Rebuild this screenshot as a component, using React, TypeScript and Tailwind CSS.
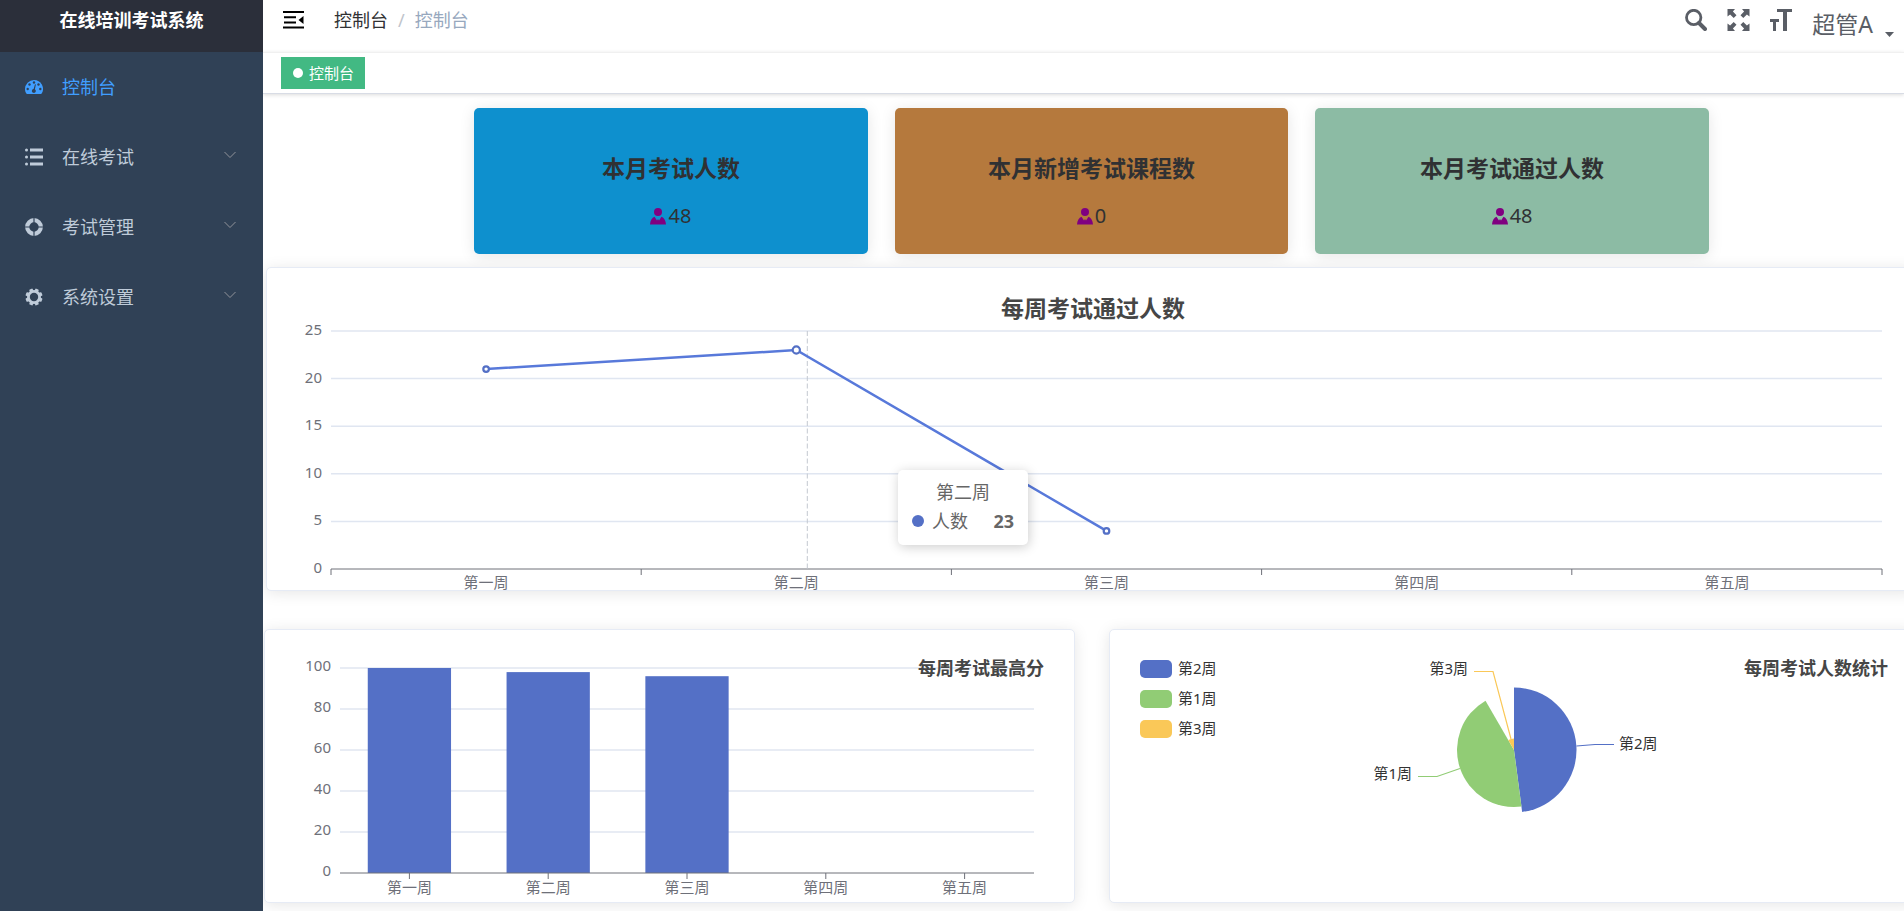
import { useLayoutEffect, useRef, useState, ReactNode } from "react";

const weeks = ["第一周", "第二周", "第三周", "第四周", "第五周"];
const passed = [21, 23, 4];
const topScores = [100, 98, 96];

const stats = [
  { title: "本月考试人数", value: 48, color: "bg-[#0e90ce]" },
  { title: "本月新增考试课程数", value: 0, color: "bg-[#b5793d]" },
  { title: "本月考试通过人数", value: 48, color: "bg-[#8cbba4]" },
];

const slices = [
  { name: "第2周", fill: "#5470c6", bg: "bg-[#5470c6]" },
  { name: "第1周", fill: "#91cc75", bg: "bg-[#91cc75]" },
  { name: "第3周", fill: "#fac858", bg: "bg-[#fac858]" },
];

const cardStyle = "bg-white border border-[#e6ebf5] rounded-[5px] shadow-[0_2px_15px_rgba(0,0,0,0.1)] overflow-hidden";

// charts redraw to the width of their card
function useWidth(initial: number) {
  const ref = useRef<HTMLDivElement>(null);
  const [width, setWidth] = useState(initial);

  useLayoutEffect(() => {
    const el = ref.current;
    if (!el) return;
    const update = () => setWidth(el.clientWidth);
    update();
    const observer = new ResizeObserver(update);
    observer.observe(el);
    return () => observer.disconnect();
  }, []);

  return { ref, width };
}

function DashboardIcon() {
  return (
    <svg className="w-[18px] h-[18px]" viewBox="0 0 18 18" fill="currentColor">
      <path d="M9 2a9 9 0 0 0-9 9c0 1.700.5 3.300 1.300 4.600.2.300.5.400.8.400h13.800c.3 0 .6-.1.800-.4A9 9 0 0 0 9 2z" />
      <g fill="#304156">
        <circle cx="9" cy="4.500" r="1.200" />
        <circle cx="4.500" cy="6.500" r="1.200" />
        <circle cx="13.500" cy="6.500" r="1.200" />
        <circle cx="2.700" cy="11" r="1.200" />
        <circle cx="15.300" cy="11" r="1.200" />
        <path d="M10 6.300l.9.300-1 4.600a2 2 0 1 1-1.300-.3z" />
      </g>
    </svg>
  );
}

function ListIcon() {
  return (
    <svg className="w-[18px] h-[18px]" viewBox="0 0 18 18" fill="currentColor">
      <path d="M5 .5h13v3H5zM5 7.500h13v3H5zM5 14.500h13v3H5z" />
      <circle cx="1.500" cy="2" r="1.500" />
      <circle cx="1.500" cy="9" r="1.500" />
      <circle cx="1.500" cy="16" r="1.500" />
    </svg>
  );
}

function RingIcon() {
  return (
    <svg className="w-[18px] h-[18px]" viewBox="0 0 18 18" fill="none">
      <circle cx="9" cy="9" r="6.800" stroke="currentColor" strokeWidth="4.200" />
      <path d="M9 0v5M9 13v5M0 9h5M13 9h5" stroke="#304156" strokeWidth="1.200" />
    </svg>
  );
}

function GearIcon() {
  return (
    <svg className="w-[18px] h-[18px]" viewBox="0 0 18 18" fill="currentColor">
      {[22.5, 67.5, 112.5, 157.5].map((a) => (
        <rect key={a} x="7.200" y=".4" width="3.600" height="17.200" rx=".8" transform={`rotate(${a} 9 9)`} />
      ))}
      <circle cx="9" cy="9" r="7" />
      <circle cx="9" cy="9" r="4.200" fill="#304156" />
    </svg>
  );
}

function PersonIcon() {
  return (
    <svg className="w-4 h-[17px] text-[#800080]" viewBox="0 0 16 17" fill="currentColor">
      <circle cx="8" cy="4" r="4" />
      <path d="M4.500 8.700L7 12.500l1-1.500 1 1.500 2.500-3.800c2.500 1 4.300 3.600 4.500 7.800H0c.2-4.200 2-6.800 4.500-7.800z" />
    </svg>
  );
}

function SearchIcon() {
  return (
    <svg className="w-[22px] h-[22px]" viewBox="0 0 22 22" fill="none" stroke="currentColor">
      <circle cx="8.700" cy="8.500" r="7.200" strokeWidth="2.800" />
      <path d="M14 14l6 6" strokeWidth="4" strokeLinecap="round" />
    </svg>
  );
}

function FullscreenIcon() {
  return (
    <svg className="w-[23px] h-[22px]" viewBox="0 0 22 22" fill="currentColor">
      {[0, 90, 180, 270].map((a) => (
        <path key={a} d="M0 0h7.500L5.400 2.600 9 6.200 6.200 9 2.600 5.400 0 7.500z" transform={`rotate(${a} 11 11)`} />
      ))}
    </svg>
  );
}

function FontSizeIcon() {
  return (
    <svg className="w-[22px] h-[22px]" viewBox="0 0 22 22" fill="currentColor">
      <rect x="7" y="0" width="15" height="3" />
      <rect x="13" y="0" width="4" height="22" />
      <rect x="0" y="10" width="9" height="3" />
      <rect x="3" y="10" width="3" height="12" />
    </svg>
  );
}

function CollapseIcon() {
  return (
    <svg className="w-[21px] h-[18px]" viewBox="0 0 21 18" fill="currentColor">
      <path d="M0 0h21v2H0zM1 5.300h12v2H1zM1 10.500h12v2H1zM0 15.500h21v2H0zM20.500 5v8L15.500 9z" />
    </svg>
  );
}

const menu: { label: string; icon: ReactNode; active?: boolean }[] = [
  { label: "控制台", icon: <DashboardIcon />, active: true },
  { label: "在线考试", icon: <ListIcon /> },
  { label: "考试管理", icon: <RingIcon /> },
  { label: "系统设置", icon: <GearIcon /> },
];

function Sidebar() {
  return (
    <aside className="w-[263px] shrink-0 bg-[#304156] text-[#bfcbd9]">
      <h1 className="h-[52px] pb-3 flex items-center justify-center bg-[#2b2f3a] text-white text-lg font-bold">
        在线培训考试系统
      </h1>
      <nav>
        {menu.map((item) =>
          item.active ? (
            <a key={item.label} href="#" className="flex items-center h-[70px] px-[25px] text-lg text-[#409eff]">
              {item.icon}
              <span className="ml-[19px]">{item.label}</span>
            </a>
          ) : (
            <button key={item.label} className="flex items-center w-full h-[70px] pl-[25px] pr-[27px] text-lg cursor-pointer">
              {item.icon}
              <span className="ml-[19px]">{item.label}</span>
              <svg className="ml-auto w-3 h-2 mb-1 text-[#909399]" viewBox="0 0 12 8" fill="none" stroke="currentColor">
                <path d="M.5 1L6 6.500 11.500 1" />
              </svg>
            </button>
          )
        )}
      </nav>
    </aside>
  );
}

function Header() {
  return (
    <header className="flex items-center h-[52px] pb-3 pl-5 pr-[10px] text-lg">
      <button aria-label="收起菜单" className="text-black cursor-pointer">
        <CollapseIcon />
      </button>
      <nav className="flex items-center ml-[30px]">
        <a href="#" className="text-[#303133]">控制台</a>
        <span className="mx-[10px] text-[#c0c4cc]">/</span>
        <span className="text-[#97a8be]">控制台</span>
      </nav>
      <div className="ml-auto flex items-center gap-5 text-[#5a5e66]">
        <button aria-label="搜索" className="cursor-pointer"><SearchIcon /></button>
        <button aria-label="全屏" className="cursor-pointer"><FullscreenIcon /></button>
        <button aria-label="字体大小" className="cursor-pointer"><FontSizeIcon /></button>
        <button className="flex items-end mt-2 text-[23px] leading-8 cursor-pointer">
          超管A
          <svg className="ml-3 mb-[3px] w-[9px] h-[5px]" viewBox="0 0 9 5" fill="currentColor">
            <path d="M0 0h9L4.500 5z" />
          </svg>
        </button>
      </div>
    </header>
  );
}

function TagsBar() {
  return (
    <div className="h-[42px] px-[18px] pt-1 border-y border-t-[#f0f0f0] border-b-[#d8dce5] shadow-[0_1px_4px_rgba(0,0,0,0.14)]">
      <a href="#" className="inline-flex items-center gap-[6px] h-8 pl-3 pr-[11px] bg-[#42b983] text-white text-[15px]">
        <span className="w-[10px] h-[10px] rounded-full bg-white" />
        控制台
      </a>
    </div>
  );
}

function StatCards() {
  return (
    <div className="w-3/4 mx-auto px-1 mt-[14px] flex gap-[27px]">
      {stats.map((s) => (
        <section
          key={s.title}
          className={`flex-1 h-[146px] rounded-[5px] shadow-[0_2px_15px_rgba(0,0,0,0.1)] flex flex-col items-center text-[#303133] ${s.color}`}
        >
          <h3 className="mt-11 text-[23px] leading-8 font-bold">{s.title}</h3>
          <p className="mt-4 flex items-center gap-[2px] text-xl leading-8">
            <PersonIcon />
            {s.value}
          </p>
        </section>
      ))}
    </div>
  );
}

function Tooltip() {
  return (
    <div className="absolute left-[38.2%] top-[202px] w-[130px] h-[75px] px-[14px] pt-2 rounded-[5px] bg-white text-[#666] text-lg shadow-[1px_2px_12px_rgba(0,0,0,0.2)]">
      <p className="text-center leading-7">第二周</p>
      <p className="flex items-center leading-[30px]">
        <span className="w-3 h-3 mr-2 rounded-full bg-[#5470c6]" />
        人数
        <b className="ml-auto font-bold">23</b>
      </p>
    </div>
  );
}

function LineChart() {
  const { ref, width } = useWidth(1652);
  const left = 64;
  const right = width - 37;
  const bottom = 301;
  const step = (right - left) / weeks.length;
  const x = (i: number) => left + step * (i + 0.5);
  const y = (v: number) => bottom - (v * 238) / 25;
  const pointer = x(1) + 11;

  return (
    <div ref={ref} className={`relative ml-[3px] mt-[13px] ${cardStyle}`}>
      <svg width={width} height={322} className="block">
        {[0, 5, 10, 15, 20, 25].map((v) => (
          <g key={v}>
            {v > 0 && <line x1={left} x2={right} y1={y(v)} y2={y(v)} stroke="#e0e6f1" strokeWidth="1.500" />}
            <text x={left - 9} y={y(v) + 4} textAnchor="end" fill="#6e7079" className="text-[15px]">{v}</text>
          </g>
        ))}
        <line x1={left} x2={right} y1={bottom} y2={bottom} stroke="#6e7079" />
        {[0, 1, 2, 3, 4, 5].map((i) => (
          <line key={i} x1={left + step * i} x2={left + step * i} y1={bottom} y2={bottom + 6} stroke="#6e7079" />
        ))}
        {weeks.map((w, i) => (
          <text key={w} x={x(i)} y={bottom + 19} textAnchor="middle" fill="#6e7079" className="text-[15px]">{w}</text>
        ))}
        <line x1={pointer} x2={pointer} y1={63} y2={bottom} stroke="#c3c8d0" strokeDasharray="5 2.500" />
        <polyline points={passed.map((v, i) => `${x(i)},${y(v)}`).join(" ")} fill="none" stroke="#5879da" strokeWidth="2.500" />
        {passed.map((v, i) => (
          <circle key={i} cx={x(i)} cy={y(v)} r={i === 1 ? 3.6 : 2.8} fill="#fff" stroke="#5470c6" strokeWidth="2.200" />
        ))}
        <text x={width / 2} y={49} textAnchor="middle" fill="#464646" className="text-[23px] font-bold">每周考试通过人数</text>
      </svg>
      <Tooltip />
    </div>
  );
}

function BarChart() {
  const { ref, width } = useWidth(808);
  const left = 75;
  const right = width - 40;
  const bottom = 243;
  const step = (right - left) / weeks.length;
  const bar = step * 0.6;
  const y = (v: number) => bottom - v * 2.05;

  return (
    <div ref={ref} className={cardStyle}>
      <svg width={width} height={272} className="block">
        {[0, 20, 40, 60, 80, 100].map((v) => (
          <g key={v}>
            {v > 0 && <line x1={left} x2={right} y1={y(v)} y2={y(v)} stroke="#e0e6f1" strokeWidth="1.500" />}
            <text x={left - 9} y={y(v) + 3} textAnchor="end" fill="#6e7079" className="text-[15px]">{v}</text>
          </g>
        ))}
        {topScores.map((v, i) => (
          <rect key={i} x={left + step * (i + 0.5) - bar / 2} y={y(v)} width={bar} height={bottom - y(v)} fill="#5470c6" />
        ))}
        <line x1={left} x2={right} y1={bottom} y2={bottom} stroke="#6e7079" />
        {weeks.map((w, i) => {
          const cx = left + step * (i + 0.5);
          return (
            <g key={w}>
              <line x1={cx} x2={cx} y1={bottom} y2={bottom + 6} stroke="#6e7079" />
              <text x={cx} y={bottom + 20} textAnchor="middle" fill="#6e7079" className="text-[15px]">{w}</text>
            </g>
          );
        })}
        <text x={width - 30} y={45} textAnchor="end" fill="#464646" className="text-lg font-bold">每周考试最高分</text>
      </svg>
    </div>
  );
}

function sector(r: number, from: number, to: number) {
  const point = (deg: number) => {
    const a = (deg * Math.PI) / 180;
    return `${r * Math.sin(a)} ${-r * Math.cos(a)}`;
  };
  return `M0 0L${point(from)}A${r} ${r} 0 0 1 ${point(to)}Z`;
}

function PieChart() {
  const { ref, width } = useWidth(808);

  return (
    <div ref={ref} className={`relative ${cardStyle}`}>
      <svg width={width} height={272} className="block">
        <g transform={`translate(${Math.floor(width / 2)} 120)`}>
          <path d={sector(62.5, 0, 172.5)} fill={slices[0].fill} />
          <path d={sector(57, 172.5, 330)} fill={slices[1].fill} />
          <path d={sector(11.5, 330, 360)} fill={slices[2].fill} />
          <g fill="none" strokeWidth="1.200">
            <path d="M62.500 -4L81 -5.500H100" stroke={slices[0].fill} />
            <path d="M-54 18.500L-77 26.500H-96" stroke={slices[1].fill} />
            <path d="M-3 -11L-21 -78.500H-40" stroke={slices[2].fill} />
          </g>
          <g fill="#333" className="text-[15px]">
            <text x="105" y="-1">第2周</text>
            <text x="-102" y="29" textAnchor="end">第1周</text>
            <text x="-46" y="-76" textAnchor="end">第3周</text>
          </g>
        </g>
        <text x={width - 31} y={45} textAnchor="end" fill="#464646" className="text-lg font-bold">每周考试人数统计</text>
      </svg>
      <ul className="absolute left-[30px] top-[23px] text-[15px] text-[#333]">
        {slices.map((s) => (
          <li key={s.name} className="flex items-center gap-[6px] h-[30px]">
            <span className={`w-8 h-[18px] mt-[2px] rounded-[5px] ${s.bg}`} />
            {s.name}
          </li>
        ))}
      </ul>
    </div>
  );
}

export default function App() {
  return (
    <div className="flex min-h-screen bg-white font-['Noto_Sans','Noto_Sans_CJK_SC',sans-serif]">
      <Sidebar />
      <div className="flex-1 min-w-0 overflow-hidden">
        <Header />
        <TagsBar />
        <main className="-mr-4">
          <StatCards />
          <LineChart />
          <div className="grid grid-cols-2 gap-[34px] ml-px mt-[38px]">
            <BarChart />
            <PieChart />
          </div>
        </main>
      </div>
    </div>
  );
}
